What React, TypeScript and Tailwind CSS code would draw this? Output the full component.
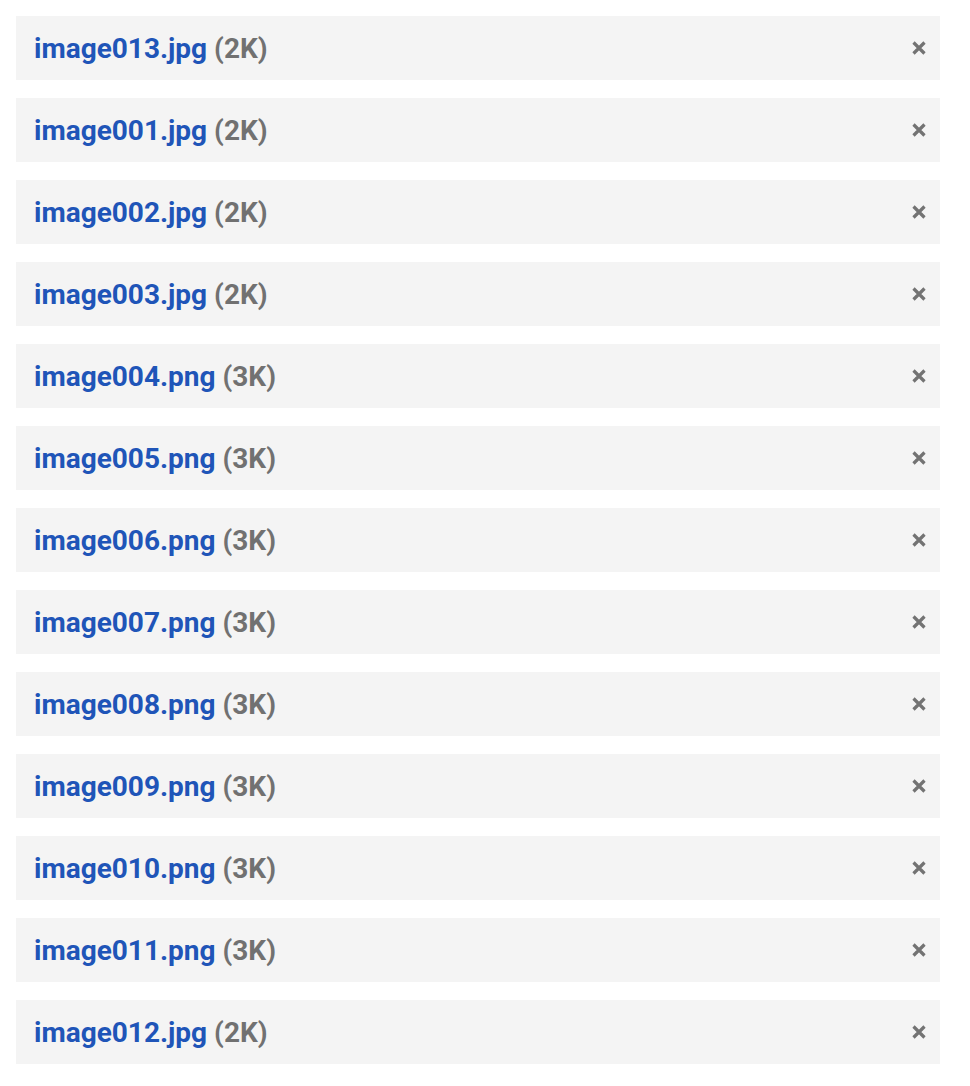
const files = [
  ["image013.jpg", "2K"],
  ["image001.jpg", "2K"],
  ["image002.jpg", "2K"],
  ["image003.jpg", "2K"],
  ["image004.png", "3K"],
  ["image005.png", "3K"],
  ["image006.png", "3K"],
  ["image007.png", "3K"],
  ["image008.png", "3K"],
  ["image009.png", "3K"],
  ["image010.png", "3K"],
  ["image011.png", "3K"],
  ["image012.jpg", "2K"],
]

const CloseIcon = () => (
  <svg width="16" height="16" viewBox="0 0 16 16" className="text-[#737373]">
    <path d="M2.5 2.5 L13.5 13.5 M13.5 2.5 L2.5 13.5" stroke="currentColor" strokeWidth="3.2" />
  </svg>
)

const AttachmentRow = ({ name, size }: { name: string; size: string }) => (
  <div className="flex h-16 items-center justify-between bg-[#f4f4f4] pl-[18px] pr-[13px]">
    <div className="pt-[2px] text-[28px] font-bold leading-none">
      <span className="text-[#1f55b8]">{name}</span>
      <span className="text-[#717171]"> ({size})</span>
    </div>
    <button className="flex h-4 w-4 items-center justify-center">
      <CloseIcon />
    </button>
  </div>
)

export default function App() {
  return (
    <div className="min-h-screen bg-white pl-4 pt-4 pr-[30px] font-['Roboto',sans-serif]">
      <div className="flex flex-col gap-[18px]">
        {files.map(([name, size]) => (
          <AttachmentRow key={name} name={name} size={size} />
        ))}
      </div>
    </div>
  )
}
